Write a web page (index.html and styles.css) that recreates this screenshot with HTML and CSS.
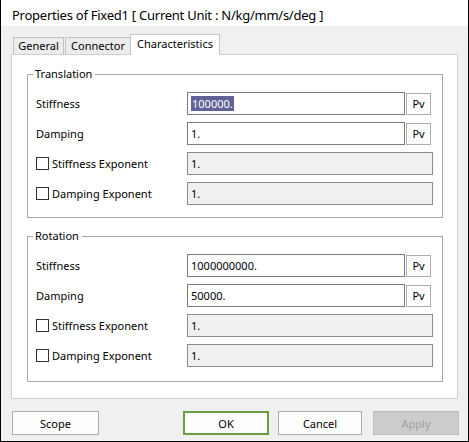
FILE: index.html
```html
<!DOCTYPE html>
<html>
<head>
<meta charset="utf-8">
<link rel="stylesheet" href="styles.css">
</head>
<body>
<div class="window">
  <div class="titlebar">Properties of Fixed1 [ Current Unit : N/kg/mm/s/deg ]</div>
  <div class="body">
    <div class="tabs">
      <div class="tab tab-general">General</div>
      <div class="tab tab-connector">Connector</div>
      <div class="tab tab-char active">Characteristics</div>
    </div>
    <div class="panel">
      <fieldset class="group">
        <legend>Translation</legend>
        <div class="row">
          <span class="label">Stiffness</span>
          <div class="field"><div class="input"><span class="sel">100000.</span></div><button class="pv">Pv</button></div>
        </div>
        <div class="row">
          <span class="label">Damping</span>
          <div class="field"><div class="input">1.</div><button class="pv">Pv</button></div>
        </div>
        <div class="row">
          <span class="label"><span class="check"></span>Stiffness Exponent</span>
          <div class="field"><div class="input disabled">1.</div></div>
        </div>
        <div class="row">
          <span class="label"><span class="check"></span>Damping Exponent</span>
          <div class="field"><div class="input disabled">1.</div></div>
        </div>
      </fieldset>
      <fieldset class="group group-rot">
        <legend>Rotation</legend>
        <div class="row">
          <span class="label">Stiffness</span>
          <div class="field"><div class="input">1000000000.</div><button class="pv">Pv</button></div>
        </div>
        <div class="row">
          <span class="label">Damping</span>
          <div class="field"><div class="input">50000.</div><button class="pv">Pv</button></div>
        </div>
        <div class="row">
          <span class="label"><span class="check"></span>Stiffness Exponent</span>
          <div class="field"><div class="input disabled">1.</div></div>
        </div>
        <div class="row">
          <span class="label"><span class="check"></span>Damping Exponent</span>
          <div class="field"><div class="input disabled">1.</div></div>
        </div>
      </fieldset>
    </div>
    <div class="buttons">
      <button class="btn btn-scope">Scope</button>
      <div class="btn-group">
        <button class="btn btn-ok">OK</button>
        <button class="btn btn-cancel">Cancel</button>
        <button class="btn btn-apply">Apply</button>
      </div>
    </div>
  </div>
</div>
</body>
</html>
```
FILE: styles.css
```css
* { box-sizing: border-box; }
html, body { margin: 0; padding: 0; }
body {
  font-family: "Noto Sans", "Open Sans", sans-serif;
  font-size: 11px;
  color: #000;
  background: #f0f0f0;
}
.window {
  width: 469px;
  height: 442px;
  border: 1px solid #000;
  border-top: 0;
  background: #f0f0f0;
  display: flex;
  flex-direction: column;
}
.titlebar {
  height: 26px;
  background: #fff;
  padding-left: 11px;
  font-size: 13px;
  line-height: 30px;
  letter-spacing: -0.25px;
  white-space: nowrap;
}
.body {
  padding: 0 9px 0 10px;
}
.tabs {
  display: flex;
  align-items: flex-end;
  height: 20px;
  margin-top: 8px;
  padding-left: 2px;
}
.tab {
  height: 17px;
  border: 1px solid #c4c4c4;
  border-bottom: 0;
  background: #ececec;
  text-align: center;
  line-height: 15px;
  white-space: nowrap;
}
.tab-general { width: 51px; margin-right: 1px; }
.tab-connector { width: 65px; border-right: 0; }
.tab-char { width: 90px; }
.tab.active {
  height: 21px;
  margin-bottom: -1px;
  background: #fff;
  position: relative;
  z-index: 1;
  line-height: 17px;
}
.panel {
  height: 345px;
  width: 447px;
  background: #fff;
  border: 1px solid #cfcfcf;
  padding: 11px 14px 0 15px;
}
.group {
  margin: 0;
  padding: 10px 9px 12px 8px;
  border: 1px solid #a8a8a8;
  display: flex;
  flex-direction: column;
  gap: 7px;
}
.group-rot {
  margin-top: 10px;
  padding-bottom: 14px;
}
.group legend {
  padding: 0 3px 0 2px;
  margin-left: -3px;
  line-height: 16px;
  font-size: 11px;
}
.row {
  display: flex;
  align-items: center;
  height: 23px;
}
.label {
  width: 151px;
  flex: none;
  display: flex;
  align-items: center;
  white-space: nowrap;
}
.check {
  width: 13px;
  height: 13px;
  border: 1px solid #333;
  background: #fff;
  margin-right: 3px;
  flex: none;
}
.field {
  flex: 1;
  display: flex;
  align-items: center;
  gap: 1px;
}
.input {
  flex: 1;
  height: 23px;
  border: 1px solid #7a7a7a;
  background: #fff;
  padding: 2px 0 0 3px;
  line-height: 17px;
  white-space: nowrap;
}
.input.disabled {
  background: #f0f0f0;
  border-color: #8c8c8c;
}
.sel {
  background: #62629a;
  color: #fff;
  padding: 0 1px;
}
.pv {
  width: 25px;
  height: 22px;
  flex: none;
  margin-right: 2px;
  border: 1px solid #adadad;
  background: #fdfdfd;
  font-family: inherit;
  font-size: 11px;
  padding: 0;
  color: #000;
}
.buttons {
  display: flex;
  justify-content: space-between;
  margin-top: 12px;
  padding-left: 1px;
}
.btn-group {
  display: flex;
}
.btn {
  height: 24px;
  border: 1px solid #adadad;
  background: #fdfdfd;
  font-family: inherit;
  font-size: 11px;
  color: #000;
  padding: 0;
}
.btn-scope { width: 87px; }
.btn-ok { width: 86px; border: 2px solid #6a9e40; }
.btn-cancel { width: 84px; margin-left: 9px; }
.btn-apply {
  width: 86px;
  margin-left: 11px;
  background: #cccccc;
  border-color: #bfbfbf;
  color: #a0a0a0;
}
```
